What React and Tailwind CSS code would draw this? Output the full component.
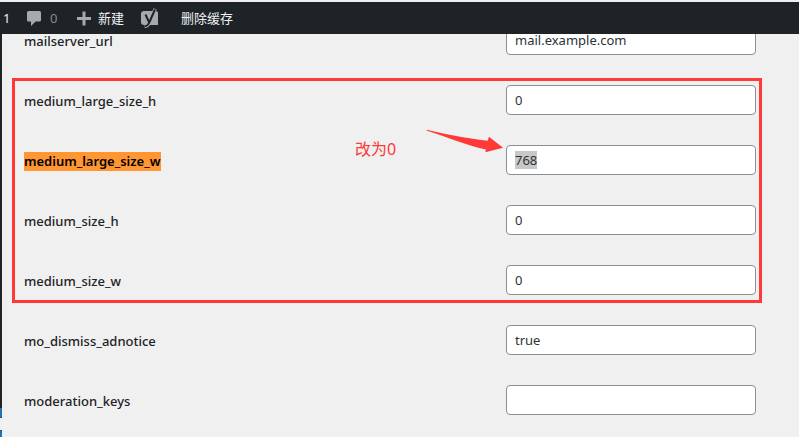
import { useEffect, useRef } from "react";

const options = [
  { name: "mailserver_url", value: "mail.example.com" },
  { name: "medium_large_size_h", value: "0" },
  { name: "medium_large_size_w", value: "768", highlighted: true },
  { name: "medium_size_h", value: "0" },
  { name: "medium_size_w", value: "0" },
  { name: "mo_dismiss_adnotice", value: "true" },
  { name: "moderation_keys", value: "" },
];

function CommentIcon() {
  return (
    <svg className="size-4" viewBox="0 0 16 16" fill="#a7aaad" aria-hidden="true">
      <path d="M2.5 1h11A1.500 1.500 0 0 1 15 2.500v7.500A1.500 1.500 0 0 1 13.500 11.500H9.500L5 16V11.500H2.500A1.500 1.500 0 0 1 1 10v-7.500A1.500 1.500 0 0 1 2.500 1z" />
    </svg>
  );
}

function PlusIcon() {
  return (
    <svg className="size-4" viewBox="0 0 16 16" fill="#a7aaad" aria-hidden="true">
      <path d="M6.500 1.500h3V7H15v3H9.500v5.500h-3V10H1V7h5.500z" />
    </svg>
  );
}

function YoastIcon() {
  return (
    <svg className="size-5" viewBox="0 0 20 20" aria-hidden="true">
      <path d="M4 3h11.500L18 4v13H4a3 3 0 0 1-3-3V6a3 3 0 0 1 3-3z" fill="#a7aaad" />
      <path d="M5.500 6.500L9 14.200M15.200 0.800L9.500 14C8.300 17 7 18.400 4.600 18.400" fill="none" stroke="#a7aaad" strokeWidth="3.400" />
      <path d="M5.500 6.500L9 14.200M15 1.300L9.500 14C8.300 17 7 18.200 4.800 18.300" fill="none" stroke="#1d2327" strokeWidth="2" />
    </svg>
  );
}

function AdminBar() {
  return (
    <header className="relative z-10 border-t-2 border-[#f0f0f4] bg-[#1d2327]">
      <nav className="flex h-8 items-center text-[13px] leading-8 text-[#f0f0f1]">
        <a href="#updates" className="w-[26px] pl-[3px]">1</a>
        <a href="#comments" className="flex w-[50px] items-center gap-2 text-[#888b8e]">
          <CommentIcon />
          <span>0</span>
        </a>
        <a href="#new" className="flex w-16 items-center gap-[6px]">
          <PlusIcon />
          <span>新建</span>
        </a>
        <a href="#seo" aria-label="Yoast SEO" className="w-[41px]">
          <YoastIcon />
        </a>
        <a href="#purge">删除缓存</a>
      </nav>
    </header>
  );
}

function OptionRow({ option }) {
  const field = useRef(null);

  useEffect(() => {
    if (option.highlighted) {
      field.current.focus({ preventScroll: true });
      field.current.select();
    }
  }, [option.highlighted]);

  return (
    <tr className="h-[60px]">
      <th scope="row" className="pt-[2px] pl-[22px] text-left text-[13px] leading-[19px]">
        <label
          htmlFor={option.name}
          className={
            option.highlighted
              ? "inline-block bg-[#ff9632] font-semibold text-black"
              : "inline-block font-medium"
          }
        >
          {option.name}
        </label>
      </th>
      <td>
        <input
          id={option.name}
          ref={field}
          type="text"
          defaultValue={option.value}
          className="block h-[30px] w-full max-w-[250px] rounded-[4px] border border-[#8c8f94] bg-white px-2 text-[13px] leading-[19px] text-[#2c3338] outline-none selection:bg-[#c8c8c8] selection:text-[#2c3338]"
        />
      </td>
    </tr>
  );
}

export default function App() {
  return (
    <div className="flex h-screen flex-col overflow-hidden bg-[#f0f0f0] font-['Noto_Sans','Noto_Sans_CJK_SC',sans-serif] text-[#1d2327]">
      <AdminBar />
      <div className="flex min-h-0 flex-1">
        <aside className="flex w-[2px] shrink-0 flex-col justify-end bg-[#1d2327]">
          <div className="h-[10px] rounded-br-[2px] bg-[#2271b1]" />
          <div className="h-3 bg-[#f0f0f0]" />
          <div className="h-[7px] rounded-tr-[2px] bg-[#2271b1]" />
        </aside>
        <main className="relative min-w-0 flex-1">
          <table className="-mt-6 w-full table-fixed border-collapse">
            <colgroup>
              <col className="w-[504px]" />
              <col />
            </colgroup>
            <tbody>
              {options.map((option) => (
                <OptionRow key={option.name} option={option} />
              ))}
            </tbody>
          </table>
          <div className="pointer-events-none absolute top-11 left-[10px] h-[225px] w-[750px] border-3 border-[#ff3838]" />
          <p className="absolute top-[103px] left-[353px] text-[16px] leading-6 text-[#ff3838]">改为0</p>
          <svg className="pointer-events-none absolute top-[94px] left-[424px] h-7 w-[78px]" viewBox="0 0 78 28" fill="#ff3838" aria-hidden="true">
            <path d="M1 1.800C16 5.500 40 10.500 61.700 12.700L63 8.800L77 19.700L59.300 24.200L60 21.500C46 19 22 9.500 0.500 2.500Z" />
          </svg>
        </main>
      </div>
    </div>
  );
}
